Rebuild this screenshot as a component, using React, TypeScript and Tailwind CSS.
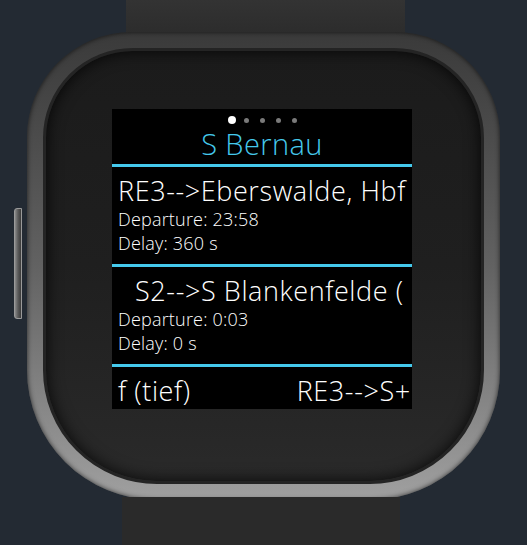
import React from 'react';

const departures = [
  { line: 'RE3-->Eberswalde, Hbf', time: '23:58', delay: '360 s' },
  { line: 'S2-->S Blankenfelde (', time: '0:03', delay: '0 s' },
];

function Divider() {
  return <div className="h-[3px] w-full shrink-0 bg-[#45c9ec]" />;
}

export default function App() {
  return (
    <div className="w-[527px] h-[545px] overflow-hidden bg-[#232a33] flex flex-col items-start">
      {/* strap top */}
      <div className="ml-[126px] w-[279px] h-[34px] shrink-0 bg-gradient-to-b from-[#333] to-[#2c2c2c]" />

      {/* case + side button */}
      <div className="flex items-start -mt-[2px] ml-[14px] shrink-0">
        <div className="mt-[176px] w-[8px] h-[111px] rounded-l-[3px] bg-gradient-to-r from-[#8a8a8a] via-[#5a5a5a] to-[#3a3a3a] border border-[#9a9a9a]" />
        <div className="ml-[5px] w-[473px] h-[468px] rounded-t-[105px] rounded-b-[130px] bg-gradient-to-b from-[#3a3a3a] via-[#626262] to-[#a0a0a0] p-[16px] shadow-[inset_0_0_5px_rgba(0,0,0,0.7)]">
          <div className="w-full h-full rounded-t-[90px] rounded-b-[114px] border-[3px] border-[#242424] bg-gradient-to-b from-[#1b1b1b] via-[#1f1f1f] to-[#2a2a2a] pt-[58px] pl-[66px] shadow-[inset_0_0_16px_rgba(0,0,0,0.85)]">
            {/* screen */}
            <div className="w-[300px] h-[300px] bg-black overflow-hidden flex flex-col text-white font-light font-['Open_Sans',sans-serif]">
              <div className="h-[55px] shrink-0 flex flex-col items-center">
                <div className="mt-[7px] flex items-center">
                  <span className="w-[8px] h-[8px] rounded-full bg-white" />
                  <span className="ml-[8px] w-[5px] h-[5px] rounded-full bg-[#7a7a7a]" />
                  <span className="ml-[11px] w-[5px] h-[5px] rounded-full bg-[#7a7a7a]" />
                  <span className="ml-[11px] w-[5px] h-[5px] rounded-full bg-[#7a7a7a]" />
                  <span className="ml-[11px] w-[5px] h-[5px] rounded-full bg-[#7a7a7a]" />
                </div>
                <div className="mt-[3px] text-[29px] leading-[34px] tracking-[0.4px] text-[#45c9ec]">S Bernau</div>
              </div>
              <Divider />
              {departures.map((d, i) => (
                <React.Fragment key={i}>
                  <div className="h-[97px] shrink-0 flex flex-col pl-[6px] overflow-hidden">
                    <div className={`text-[27px] leading-[30px] tracking-[0.6px] mt-[9px] whitespace-nowrap ${i === 1 ? 'pl-[17px]' : ''}`}>{d.line}</div>
                    <div className="text-[18px] leading-[24px] tracking-[0.2px] mt-[1px] whitespace-nowrap">Departure: {d.time}</div>
                    <div className="text-[18px] leading-[24px] tracking-[0.2px] whitespace-nowrap">Delay: {d.delay}</div>
                  </div>
                  <Divider />
                </React.Fragment>
              ))}
              <div className="flex-1 flex pl-[6px] text-[27px] leading-[30px] tracking-[0.6px] mt-[9px] whitespace-nowrap overflow-hidden">
                <span>f (tief)</span>
                <span className="ml-[106px]">RE3--&gt;S+</span>
              </div>
            </div>
          </div>
        </div>
      </div>

      {/* strap bottom */}
      <div className="ml-[122px] -mt-[3px] w-[278px] h-[60px] shrink-0 bg-[#2a2a2a]" />
    </div>
  );
}
